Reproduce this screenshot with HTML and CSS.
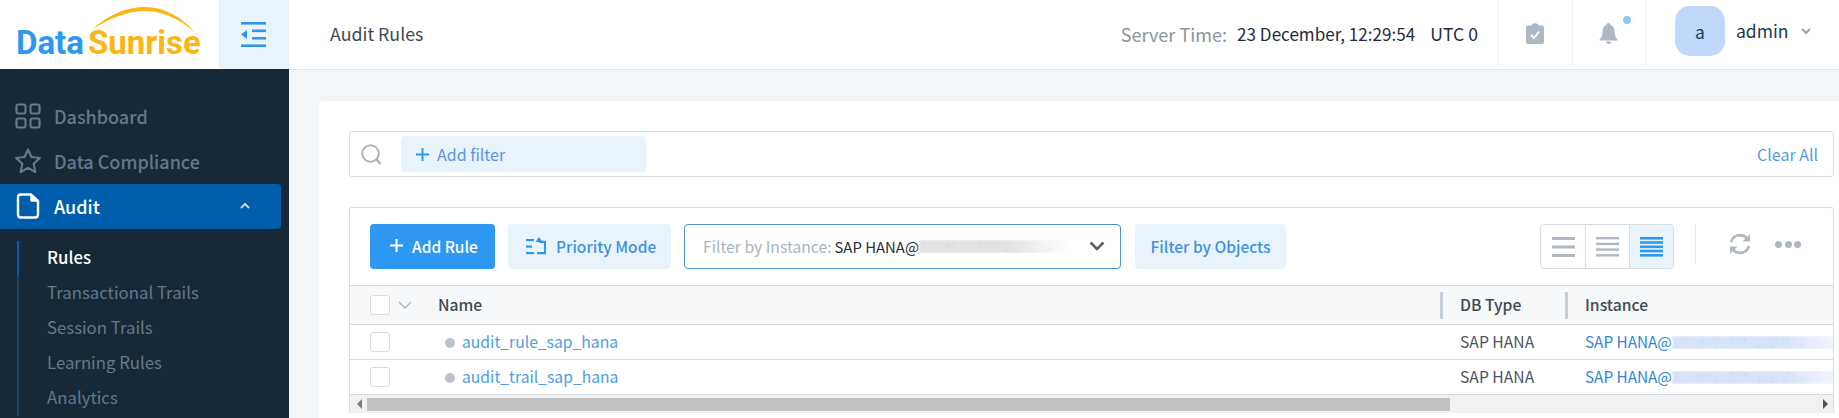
FILE: index.html
```html
<!DOCTYPE html>
<html lang="en">
<head>
    <meta charset="UTF-8">
    <title>Audit Rules - DataSunrise</title>
    <link rel="stylesheet" href="styles.css">
</head>
<body>
    <div class="app">
        <header class="topbar">
            <div class="logo">
                <svg class="logo-arc" width="110" height="32" viewBox="0 0 110 32"><path d="M0 24C14 10 34 1 52 1C74 1 92 13 103 27C92 16 74 5 52 5C34 5 14 14 0 24Z" fill="#fdb515"/></svg>
                <span class="logo-data">Data</span><span class="logo-sun">Sunrise</span>
            </div>
            <div class="menu-toggle">
                <svg width="26" height="26" viewBox="0 0 26 26" fill="#2e98f0"><rect x="0" y="0" width="25" height="2.6"/><rect x="11" y="7.5" width="14" height="2.6"/><rect x="11" y="15" width="14" height="2.6"/><rect x="0" y="22.4" width="25" height="2.6"/><path d="M0 12.5L6 8V17Z"/></svg>
            </div>
            <div class="page-title">Audit Rules</div>
            <div class="server-time">
                <span class="time-label">Server Time:</span>
                <span class="time-value">23 December, 12:29:54</span>
                <span class="time-value time-zone">UTC 0</span>
            </div>
            <div class="top-icon">
                <svg width="18" height="21" viewBox="0 0 18 21"><path d="M2 2.5H5.5C6 1 7 .3 9 .3S12 1 12.500 2.500H16C17 2.500 18 3.300 18 4.500V19C18 20.200 17 21 16 21H2C1 21 0 20.200 0 19V4.500C0 3.300 1 2.500 2 2.500Z" fill="#aeb8c2"/><path d="M5 12L8 15L13 8.500" fill="none" stroke="#fff" stroke-width="2"/></svg>
            </div>
            <div class="top-icon">
                <span class="bell-dot"></span>
                <svg width="19" height="21" viewBox="0 0 19 21" fill="#aeb8c2"><path d="M9.500 0C11 0 11.500 1 11.500 2C14.500 3 15.500 6 15.500 9C15.500 12.500 16.500 14.500 18.500 16.500V17.500H.5V16.500C2.500 14.500 3.500 12.500 3.500 9C3.500 6 4.500 3 7.500 2C7.500 1 8 0 9.500 0Z"/><path d="M7 18.500H12C12 20 11 21 9.500 21S7 20 7 18.500Z"/></svg>
            </div>
            <div class="user-menu">
                <span class="avatar">a</span>
                <span class="user-name">admin</span>
                <svg width="10" height="7" viewBox="0 0 10 7"><path d="M1 1L5 5L9 1" fill="none" stroke="#9aa5b0" stroke-width="2"/></svg>
            </div>
        </header>

        <nav class="sidebar">
            <a class="nav-item">
                <svg width="26" height="26" viewBox="0 0 26 26" fill="none" stroke="#64798a" stroke-width="2.200"><rect x="1.500" y="1.500" width="9" height="9" rx="2"/><rect x="15.500" y="1.500" width="9" height="9" rx="2"/><rect x="1.500" y="15.500" width="9" height="9" rx="2"/><rect x="15.500" y="15.500" width="9" height="9" rx="2"/></svg>
                Dashboard
            </a>
            <a class="nav-item">
                <svg width="26" height="26" viewBox="0 0 26 26" fill="none" stroke="#64798a" stroke-width="2.200" stroke-linejoin="round"><path d="M13 1.500L16.500 9L24.800 10L18.700 15.700L20.300 24L13 19.900L5.700 24L7.300 15.700L1.200 10L9.500 9Z"/></svg>
                Data Compliance
            </a>
            <a class="nav-item active">
                <svg width="26" height="26" viewBox="0 0 26 26" fill="none" stroke="#fff" stroke-width="2.400" stroke-linejoin="round"><path d="M6 1.500H16L23 8V21.500C23 23.500 22 24.500 20 24.500H6C4 24.500 3 23.500 3 21.500V4.500C3 2.500 4 1.500 6 1.500Z"/><path d="M16 2V8H22.500" fill="#fff" stroke-width="1.500"/></svg>
                Audit
                <svg class="nav-caret" width="10" height="7" viewBox="0 0 10 7"><path d="M1 6L5 2L9 6" fill="none" stroke="#c6d7e8" stroke-width="2"/></svg>
            </a>
            <ul class="sub-nav">
                <li class="current">Rules</li>
                <li>Transactional Trails</li>
                <li>Session Trails</li>
                <li>Learning Rules</li>
                <li>Analytics</li>
            </ul>
        </nav>

        <main class="content">
            <section class="card">
                <div class="filter-bar">
                    <svg width="21" height="21" viewBox="0 0 21 21" fill="none" stroke="#a9b4be" stroke-width="2"><circle cx="9.500" cy="9.500" r="8.300"/><path d="M15.500 15.500L19.500 20" stroke-width="2.600"/></svg>
                    <div class="add-filter">
                        <svg width="13" height="13" viewBox="0 0 13 13" fill="#2e98f0"><rect y="5.500" width="13" height="2"/><rect x="5.500" width="2" height="13"/></svg>
                        Add filter
                    </div>
                    <a class="clear-all">Clear All</a>
                </div>

                <div class="rules-panel">
                    <div class="toolbar">
                        <button class="btn btn-primary">
                            <svg width="13" height="13" viewBox="0 0 13 13" fill="#fff"><rect y="5.500" width="13" height="2"/><rect x="5.500" width="2" height="13"/></svg>
                            Add Rule
                        </button>
                        <button class="btn btn-soft priority-btn">
                            <svg width="21" height="18" viewBox="0 0 21 18" fill="#2e98f0"><rect y="2" width="8" height="2.200"/><rect y="8.500" width="6" height="2.200"/><rect y="15" width="8" height="2.200"/><path d="M9.500 5L13 0L16.500 5Z"/><path d="M13 4.500V6H18V15H11V17.200H20V3.800H13Z"/></svg>
                            Priority Mode
                        </button>
                        <div class="instance-select">
                            <span class="select-label">Filter by Instance:</span>
                            <span class="select-value">SAP HANA@</span>
                            <span class="redacted redacted-dark"></span>
                            <svg width="16" height="10" viewBox="0 0 16 10"><path d="M1.500 1.500L8 8L14.500 1.500" fill="none" stroke="#5f5f5f" stroke-width="2.600"/></svg>
                        </div>
                        <button class="btn btn-soft objects-btn">Filter by Objects</button>

                        <div class="density">
                            <span class="density-opt">
                                <svg width="23" height="20" viewBox="0 0 23 20" fill="#aeb8c2"><rect width="23" height="3"/><rect y="8.500" width="23" height="3"/><rect y="17" width="23" height="3"/></svg>
                            </span>
                            <span class="density-opt">
                                <svg width="23" height="20" viewBox="0 0 23 20" fill="#aeb8c2"><rect width="23" height="2.400"/><rect y="5.700" width="23" height="2.400"/><rect y="11.400" width="23" height="2.400"/><rect y="17.100" width="23" height="2.400"/></svg>
                            </span>
                            <span class="density-opt selected">
                                <svg width="23" height="20" viewBox="0 0 23 20" fill="#2e98f0"><rect width="23" height="2.600"/><rect y="4.200" width="23" height="2.600"/><rect y="8.500" width="23" height="2.600"/><rect y="12.700" width="23" height="2.600"/><rect y="17" width="23" height="2.600"/></svg>
                            </span>
                        </div>
                        <span class="tool-sep"></span>
                        <svg class="refresh" width="22" height="22" viewBox="0 0 22 22" fill="none" stroke="#aeb8c2" stroke-width="2.800"><path d="M2 9C3 5 6.500 2.200 11 2.200C14 2.200 16.500 3.500 18 5.500"/><path d="M20 13C19 17 15.500 19.800 11 19.800C8 19.800 5.500 18.500 4 16.500"/><path d="M21 1V8.500H13.500Z" fill="#aeb8c2" stroke="none"/><path d="M1 21V13.500H8.500Z" fill="#aeb8c2" stroke="none"/></svg>
                        <span class="more-dots"><i></i><i></i><i></i></span>
                    </div>

                    <table class="rules-table">
                        <colgroup>
                            <col class="col-check">
                            <col class="col-name">
                            <col class="col-type">
                            <col>
                        </colgroup>
                        <thead>
                            <tr>
                                <th>
                                    <div class="check-cell">
                                        <span class="checkbox"></span>
                                        <svg width="14" height="8" viewBox="0 0 14 8"><path d="M1 1L7 7L13 1" fill="none" stroke="#aab4be" stroke-width="1.300"/></svg>
                                    </div>
                                </th>
                                <th><div class="th-inner">Name<span class="resizer"></span></div></th>
                                <th><div class="th-inner">DB Type<span class="resizer"></span></div></th>
                                <th class="th-last">Instance</th>
                            </tr>
                        </thead>
                        <tbody>
                            <tr>
                                <td><div class="check-cell"><span class="checkbox"></span></div></td>
                                <td class="name-cell"><span class="status-dot"></span><a>audit_rule_sap_hana</a></td>
                                <td class="type-cell">SAP HANA</td>
                                <td class="instance-cell"><a>SAP HANA@</a><span class="redacted redacted-blue"></span></td>
                            </tr>
                            <tr>
                                <td><div class="check-cell"><span class="checkbox"></span></div></td>
                                <td class="name-cell"><span class="status-dot"></span><a>audit_trail_sap_hana</a></td>
                                <td class="type-cell">SAP HANA</td>
                                <td class="instance-cell"><a>SAP HANA@</a><span class="redacted redacted-blue"></span></td>
                            </tr>
                        </tbody>
                    </table>

                    <div class="h-scroll">
                        <span class="arrow-left"></span>
                        <span class="thumb-track"><span class="thumb"></span></span>
                        <span class="arrow-right"></span>
                    </div>
                </div>
            </section>
        </main>
    </div>
</body>
</html>
```

FILE: styles.css
```css
* {
    margin: 0;
    padding: 0;
    box-sizing: border-box;
    font-family: "Noto Sans CJK SC", "Noto Sans", sans-serif;
}

body {
    background: #f3f6f8;
    overflow: hidden;
}

.app {
    display: grid;
    grid-template-columns: 289px 1fr;
    grid-template-rows: 70px 1fr;
    height: 100vh;
    overflow: hidden;
}

/* top bar */
.topbar {
    grid-column: 1 / 3;
    display: flex;
    align-items: stretch;
    background: white;
    border-bottom: 1px solid #e3e6e9;
}

.logo {
    position: relative;
    width: 219px;
    height: 69px;
    padding: 19px 0 0 16px;
    font-size: 33px;
    font-weight: 700;
    line-height: 42px;
    white-space: nowrap;
}

.logo span {
    font-family: Roboto, sans-serif;
}

.logo-data {
    color: #2e98f0;
    margin-right: 4px;
}

.logo-sun {
    color: #fdb515;
}

.logo-arc {
    position: absolute;
    left: 92px;
    top: 6px;
}

.menu-toggle {
    width: 70px;
    background: #e8f3fc;
    display: flex;
    align-items: center;
    justify-content: center;
}

.page-title {
    margin-left: 41px;
    flex: 1;
    font-size: 17.800px;
    line-height: 67px;
    color: #3d4a56;
}

.server-time {
    display: flex;
    align-items: center;
    gap: 10px;
    padding: 0 20px 2px 0;
    font-size: 17.100px;
}

.time-label {
    color: #8a949d;
    font-size: 18.100px;
}

.time-value {
    color: #1f2d3a;
}

.time-zone {
    margin-left: 5px;
    font-size: 17.600px;
}

.top-icon {
    position: relative;
    width: 73.500px;
    height: 66px;
    display: flex;
    align-items: center;
    justify-content: center;
    border-left: 1px solid #eef0f2;
}

.bell-dot {
    position: absolute;
    left: 50px;
    top: 16px;
    width: 8px;
    height: 8px;
    border-radius: 50%;
    background: #8fc8f5;
}

.user-menu {
    display: flex;
    align-items: flex-start;
    width: 194px;
    padding: 6px 0 0 29px;
    border-left: 1px solid #eef0f2;
    height: 66px;
    font-size: 17.500px;
    color: #24374a;
}

.avatar {
    width: 50px;
    height: 50px;
    border-radius: 15px;
    background: #bfd8fb;
    text-align: center;
    line-height: 52px;
    margin-right: 11px;
}

.user-name {
    line-height: 50px;
    margin-right: 13px;
}

.user-menu svg {
    margin-top: 22px;
}

/* sidebar */
.sidebar {
    background: #172837;
    margin-top: -1px;
    padding-top: 25px;
    overflow: hidden;
}

.nav-item {
    display: flex;
    align-items: center;
    gap: 13px;
    height: 45px;
    width: 281px;
    padding: 0 0 2px 15px;
    font-size: 18px;
    font-weight: 500;
    color: #64798a;
    border-radius: 0 4px 4px 0;
}

.nav-item.active {
    background: #005dab;
    color: white;
}

.nav-caret {
    margin-left: auto;
    margin-right: 31px;
}

.sub-nav {
    list-style: none;
    margin: 12px 0 0 17px;
    border-left: 2px solid #20405a;
}

.sub-nav li {
    height: 35px;
    line-height: 33px;
    padding-left: 28px;
    font-size: 16.800px;
    color: #64798a;
}

.sub-nav li.current {
    color: white;
    font-weight: 500;
    margin-left: -2px;
    border-left: 2px solid #005dab;
}

/* main area */
.content {
    padding: 31px 0 0 30px;
    overflow: hidden;
}

.card {
    background: white;
    border-radius: 5px 0 0 0;
    padding: 30px 5px 0 30px;
    height: 400px;
}

.filter-bar {
    display: flex;
    align-items: center;
    height: 46px;
    border: 1px solid #d9dde1;
    border-radius: 3px;
    padding: 0 15px 0 11px;
}

.add-filter {
    display: flex;
    align-items: center;
    gap: 8px;
    width: 245px;
    height: 36px;
    margin-left: 19px;
    padding-left: 15px;
    background: #e8f3fc;
    border-radius: 4px;
    font-size: 16px;
    color: #5a95de;
}

.clear-all {
    margin-left: auto;
    font-size: 16px;
    color: #4f9de0;
}

.rules-panel {
    margin-top: 30px;
    border: 1px solid #d9dde1;
    border-bottom: none;
    border-radius: 3px 3px 0 0;
}

.toolbar {
    display: flex;
    align-items: center;
    height: 77px;
    padding-left: 20px;
}

.btn {
    display: flex;
    align-items: center;
    height: 45px;
    padding-bottom: 2px;
    border: none;
    border-radius: 4px;
    font-size: 15.500px;
    font-weight: 500;
}

.btn-primary {
    width: 125px;
    gap: 9px;
    padding-left: 20px;
    background: #2e98f0;
    color: white;
}

.btn-soft {
    background: #e8f3fc;
    color: #3f92de;
}

.priority-btn {
    width: 163px;
    gap: 9px;
    margin-left: 13px;
    padding-left: 18px;
}

.instance-select {
    display: flex;
    align-items: center;
    width: 437px;
    height: 45px;
    margin-left: 13px;
    padding: 0 15px 1px 18px;
    border: 1px solid #4a93cf;
    border-radius: 4px;
    font-size: 15.700px;
}

.select-label {
    color: #a9b4be;
    margin-right: 3px;
}

.select-value {
    color: #2b3036;
    font-size: 14.900px;
}

.instance-select svg {
    margin-left: auto;
}

.redacted {
    display: inline-block;
    height: 13px;
    filter: blur(1px);
    background: repeating-linear-gradient(100deg, var(--smear) 0 1px, transparent 1px 3px);
    -webkit-mask-image: linear-gradient(90deg, black 60%, transparent);
    mask-image: linear-gradient(90deg, black 60%, transparent);
}

.redacted-dark {
    --smear: #a8a8a8;
    width: 150px;
}

.redacted-blue {
    --smear: #8aa8e6;
    width: 190px;
    vertical-align: -1px;
}

.objects-btn {
    width: 151px;
    margin-left: 14px;
    justify-content: center;
}

.density {
    display: flex;
    height: 45px;
    margin-left: auto;
    border: 1px solid #d9dde1;
    border-radius: 4px;
    overflow: hidden;
}

.density-opt {
    width: 44px;
    display: flex;
    align-items: center;
    justify-content: center;
    border-left: 1px solid #d9dde1;
}

.density-opt:first-child {
    border-left: none;
}

.density-opt.selected {
    background: #e8f3fc;
}

.tool-sep {
    width: 1px;
    height: 40px;
    margin: 0 33px 5px 21px;
    background: #e8ebee;
}

.refresh {
    margin-bottom: 5px;
}

.more-dots {
    display: flex;
    gap: 2.500px;
    margin: 0 32px 5px 24px;
}

.more-dots i {
    width: 7px;
    height: 7px;
    border-radius: 50%;
    background: #aeb8c2;
}

/* table */
.rules-table {
    width: 100%;
    table-layout: fixed;
    border-collapse: collapse;
    font-size: 15.700px;
}

.col-check {
    width: 88px;
}

.col-name {
    width: 1005px;
}

.col-type {
    width: 125px;
}

.rules-table th {
    height: 39px;
    background: #f6f8fa;
    border-top: 1px solid #d5dae0;
    border-bottom: 1px solid #d5dae0;
    text-align: left;
    font-weight: 500;
    color: #3d4a56;
}

.rules-table td {
    height: 35px;
    padding-bottom: 2px;
    border-bottom: 1px solid #d5dae0;
}

.th-inner {
    display: flex;
    align-items: flex-start;
    justify-content: space-between;
    height: 27px;
    line-height: 25px;
}

.rules-table th:nth-child(3),
.type-cell {
    padding-left: 17px;
}

.th-last,
.instance-cell {
    padding-left: 17px;
}

.rules-table .th-last {
    padding-bottom: 2px;
}

.resizer {
    width: 3px;
    height: 27px;
    background: #c5ced7;
}

.check-cell {
    display: flex;
    align-items: center;
    gap: 8px;
    padding-left: 20px;
}

.rules-table td .check-cell {
    margin-top: 2px;
}

.checkbox {
    width: 20px;
    height: 20px;
    background: white;
    border: 1px solid #d9dde1;
    border-radius: 3px;
}

.name-cell {
    white-space: nowrap;
}

.name-cell a {
    color: #4f9de0;
}

.status-dot {
    display: inline-block;
    width: 10px;
    height: 10px;
    margin: 0 7px 0 7px;
    border-radius: 50%;
    background: #bcc3cc;
}

.type-cell {
    color: #4a5561;
}

.instance-cell {
    white-space: nowrap;
    overflow: hidden;
}

.instance-cell a {
    color: #2f86da;
    font-size: 15.300px;
}

.h-scroll {
    display: flex;
    align-items: center;
    height: 18px;
    background: #f1f1f1;
}

.thumb-track {
    flex: 1;
    display: block;
    margin: 0 5px;
}

.thumb {
    display: block;
    width: 1083px;
    height: 13px;
    background: #c1c1c1;
}

.arrow-left {
    width: 0;
    height: 0;
    margin-left: 7px;
    border: 5px solid transparent;
    border-left: none;
    border-right-color: #7a7a7a;
}

.arrow-right {
    width: 0;
    height: 0;
    margin-right: 5px;
    border: 5px solid transparent;
    border-right: none;
    border-left-color: #505050;
}
```
